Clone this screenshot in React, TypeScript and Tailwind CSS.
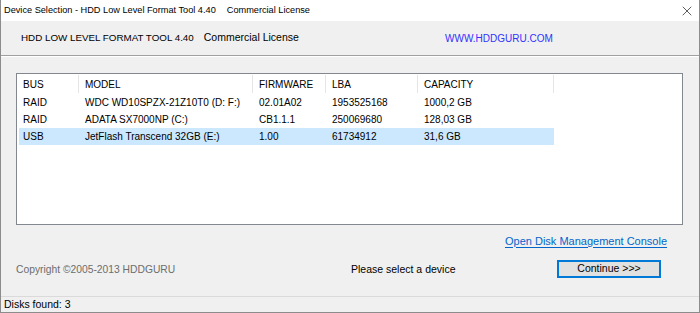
import { X } from "lucide-react";

const rows = [
  { bus: "RAID", model: "WDC WD10SPZX-21Z10T0 (D: F:)", fw: "02.01A02", lba: "1953525168", cap: "1000,2 GB" },
  { bus: "RAID", model: "ADATA SX7000NP (C:)", fw: "CB1.1.1", lba: "250069680", cap: "128,03 GB" },
  { bus: "USB", model: "JetFlash Transcend 32GB (E:)", fw: "1.00", lba: "61734912", cap: "31,6 GB", selected: true },
];

const cols = "grid grid-cols-[60px_174px_73px_92px_136px]";

export default function App() {
  return (
    <div className="flex h-[313px] w-[700px] flex-col overflow-hidden whitespace-nowrap border-x border-b border-[#8c8c8c] bg-[#f0f0f0] text-[10.5px] text-black [font-family:'Liberation_Sans',Arial,sans-serif]">
      {/* title bar */}
      <div className="flex h-[21px] shrink-0 items-center justify-between bg-white pl-[3px] pr-[4px]">
        <span className="text-[9.2px]">
          Device Selection - HDD Low Level Format Tool 4.40<span className="ml-[11px]">Commercial License</span>
        </span>
        <X size={16} strokeWidth={1.1} className="text-[#222]" />
      </div>

      {/* header */}
      <div className="flex h-[35px] shrink-0 items-center border-b border-[#a0a0a0] pl-[20px]">
        <span className="w-[424px]">
          <span className="text-[9.8px]">HDD LOW LEVEL FORMAT TOOL 4.40</span>
          <span className="ml-[10px]">Commercial License</span>
        </span>
        <span className="text-[10px] text-[#3232ff]">WWW.HDDGURU.COM</span>
      </div>
      <div className="h-px shrink-0 bg-white" />

      {/* device list */}
      <div className="ml-[15px] mt-[16px] h-[152px] w-[667px] shrink-0 border border-[#828790] bg-white pl-[2px] text-[10px]">
        <div className={`${cols} h-[20px] items-center`}>
          {["BUS", "MODEL", "FIRMWARE", "LBA", "CAPACITY"].map((h, i) => (
            <div key={h} className={`flex h-[18px] items-center border-r border-[#e5e5e5] ${i === 0 ? "pl-[4px]" : "pl-[6px]"}`}>
              {h}
            </div>
          ))}
        </div>
        {rows.map((r) => (
          <div key={r.model} className={`${cols} h-[17px] w-fit items-center ${r.selected ? "bg-[#cce8ff]" : ""}`}>
            <div className="pl-[4px]">{r.bus}</div>
            <div className="pl-[6px]">{r.model}</div>
            <div className="pl-[6px]">{r.fw}</div>
            <div className="pl-[6px]">{r.lba}</div>
            <div className="pl-[6px]">{r.cap}</div>
          </div>
        ))}
      </div>

      {/* link */}
      <div className="mt-[8px] flex h-[16px] shrink-0 items-center justify-end pr-[32px]">
        <span className="text-[11px] text-[#0066cc] underline underline-offset-2">Open Disk Management Console</span>
      </div>

      {/* footer */}
      <div className="mt-[11px] flex h-[19px] shrink-0 items-center pl-[15px]">
        <span className="w-[335px] text-[10.3px] text-[#6d6d6d]">Copyright ©2005-2013 HDDGURU</span>
        <span className="w-[206px]">Please select a device</span>
        <button className="mb-[2px] flex h-[18px] w-[104px] items-center justify-center border-2 border-[#0078d7] bg-[#e1e1e1]">
          Continue &gt;&gt;&gt;
        </button>
      </div>

      {/* status bar */}
      <div className="mt-auto flex h-[16px] shrink-0 items-center border-t border-[#dadada] pl-[3px]">
        Disks found: 3
      </div>
    </div>
  );
}
